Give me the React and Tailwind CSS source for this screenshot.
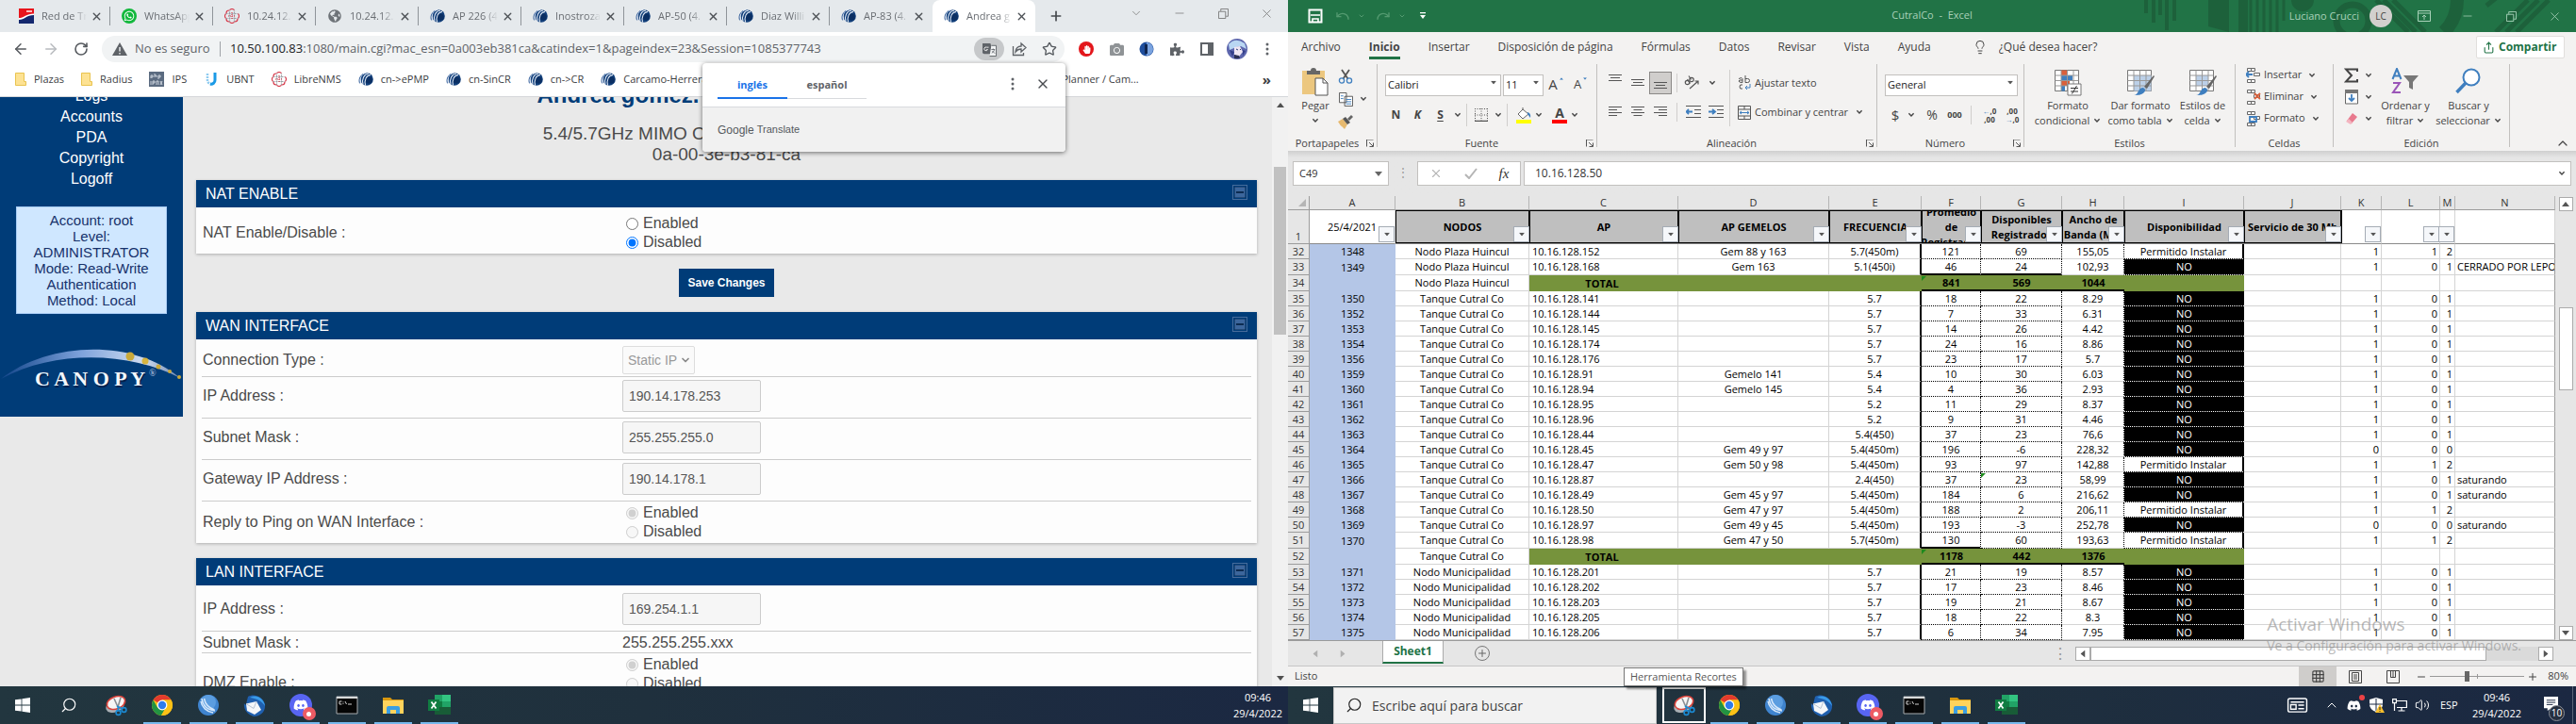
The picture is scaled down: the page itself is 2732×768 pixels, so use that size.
import React from "react";
import {
  ArrowLeft, ArrowRight, RotateCw, Star, X, Plus, Minus, ChevronDown, ChevronUp, Search,
  Undo, Redo, Lightbulb, Share, Grid3x3, Volume2,
} from "lucide-react";
import { FaWhatsapp, FaGlobeAmericas, FaPuzzlePiece, FaDiscord, FaHandPaper, FaCamera } from "react-icons/fa";

/* ---------- small shared drawings ---------- */

const Chev = ({ className = "" }) => (
  <svg viewBox="0 0 8 6" className={`h-[6px] w-2 shrink-0 ${className}`} fill="none" stroke="#444" strokeWidth="1.4">
    <path d="M1.4 1.3 4 4l2.6-2.7" />
  </svg>
);

const Tri = ({ className = "" }) => (
  <svg viewBox="0 0 8 5" className={`h-[5px] w-2 shrink-0 ${className}`}>
    <path d="M0 0h8L4 5z" fill="currentColor" />
  </svg>
);

const Cambium = () => (
  <svg viewBox="0 0 16 16" className="size-4 shrink-0">
    <circle cx="9" cy="8" r="6.8" fill="#123f7a" />
    <circle cx="11.2" cy="9" r="3.6" fill="#0b2f63" />
    <path d="M8.500 1C3 2 1 7 2.600 12M11 2C6 2.600 3.400 8 5 13.500M13 3.400C8.500 4 6 9 7.600 14.600" stroke="#dfe8f5" strokeWidth="1.100" fill="none" />
    <path d="M5 2.600C1.400 5 .2 9 1.600 12.400" stroke="#2a5796" strokeWidth="1" fill="none" />
  </svg>
);

const Telefonica = () => (
  <svg viewBox="0 0 16 16" className="size-4 shrink-0">
    <path d="M0 0h16v16H0z" fill="#e8141c" />
    <path d="M0 16V11C5 11 8 6 16 6v10z" fill="#14286e" />
    <path d="M0 12C6 12 8 7 16 7v-1.6C8 5.400 5 10 0 10z" fill="#fff" />
    <path d="M8 2h6v2H8z" fill="#fbb" />
  </svg>
);

const Knot = () => (
  <svg viewBox="0 0 16 16" className="size-4 shrink-0" fill="none" strokeWidth="1.2">
    <path d="M5.500 14.500v-13M10.500 14.500v-13M1.500 5.500h13M1.500 10.500h13" stroke="#9aa0a6" strokeDasharray="2 1" />
    <path d="M5.500 1.500C8 0 8 0 10.500 1.500M5.500 14.500C8 16 8 16 10.500 14.500M1.500 5.500C0 8 0 8 1.500 10.500M14.500 5.500C16 8 16 8 14.500 10.500M2 5c0-2 1-3 3-3M11 14c2 0 3-1 3-3M2 11c0 2 1 3 3 3" stroke="#d8394a" />
    <path d="M8 4v8M4 8h8" stroke="#d8394a" strokeDasharray="1 1" />
  </svg>
);

const Folder = () => (
  <svg viewBox="0 0 12 16" className="h-4 w-3 shrink-0">
    <path d="M.5 1.500h9v9h2v4H.5z" fill="#fde293" stroke="#e9c34f" />
  </svg>
);

const ChromeLogo = () => (
  <svg viewBox="0 0 24 24" className="size-6">
    <circle cx="12" cy="12" r="11" fill="#fbc116" />
    <path d="M12 12 2.500 6.500A11 11 0 0 1 21.500 6.500H12z" fill="#e33b2e" />
    <path d="M12 12 7.200 14.800 2.500 6.500A11 11 0 0 0 11 23l4.800-8.200z" fill="#229342" />
    <path d="M21.500 6.500H12v5l3.800 3.300L11 23A11 11 0 0 0 21.500 6.500z" fill="#fbc116" />
    <circle cx="12" cy="12" r="5.400" fill="#fff" />
    <circle cx="12" cy="12" r="4.200" fill="#2f7bea" />
  </svg>
);

const Snip = () => (
  <svg viewBox="0 0 24 24" className="size-6">
    <ellipse cx="11" cy="13" rx="10" ry="6.500" fill="#a9afb4" transform="rotate(-20 11 13)" />
    <ellipse cx="12" cy="9.500" rx="10" ry="6.500" fill="#f6f6f6" stroke="#d8433b" strokeWidth="1.600" transform="rotate(-20 12 9.500)" />
    <path d="M10 5l4 9M17 4l-3 10" stroke="#8a8f94" strokeWidth="1.600" />
    <circle cx="14.500" cy="20" r="2.400" fill="none" stroke="#1b8ad3" strokeWidth="1.600" />
    <circle cx="20.500" cy="17" r="2.400" fill="none" stroke="#1b8ad3" strokeWidth="1.600" />
    <path d="m13 13 6 3m-5-3 .5 5" stroke="#1b8ad3" strokeWidth="1.600" />
  </svg>
);

const BlueSwirl = () => (
  <svg viewBox="0 0 24 24" className="size-6">
    <circle cx="12" cy="12" r="11" fill="#3f84cf" />
    <circle cx="12" cy="9" r="8" fill="#5b9de0" />
    <path d="M5 5c1 7 6 12 14 13M7.500 5c1 5 5 10 11 12M4 8c1 6 6 11 13 12" stroke="#d5e7fa" strokeWidth="1.500" fill="none" />
  </svg>
);

const Thunderbird = () => (
  <svg viewBox="0 0 24 24" className="size-6">
    <path d="M5 3c6-4 16 0 18 8 1 8-5 13-12 13C4 22 0 16 1 10c1 2 2 2 2 1z" fill="#1f5fae" />
    <path d="M7 4c7-4 15 1 16 9-3-5-8-8-16-9z" fill="#3a9be8" />
    <path d="M3 10.500 14 8l5 9-7 5-8-4z" fill="#f4f6f9" />
    <path d="m3 10.500 8 5L14 8" fill="none" stroke="#b7c3d3" />
  </svg>
);

const DiscordApp = () => (
  <span className="relative flex size-6 items-center justify-center rounded-full bg-[#5865f2] text-white">
    <FaDiscord className="size-4" />
    <span className="absolute -right-1 -bottom-1 flex size-[14px] items-center justify-center rounded-full bg-[#ed5b64]">
      <span className="size-[5px] rounded-full bg-white" />
    </span>
  </span>
);

const Cmd = () => (
  <svg viewBox="0 0 24 20" className="h-5 w-6">
    <path d="M1 1h22v18H1z" fill="#050505" stroke="#a9adb0" />
    <path d="M1 1h22v2H1z" fill="#d8dadb" />
    <path d="M6.500 6H4v3h2.500M8 6.500v.8M8 8.200v.8M10 6l1.500 3M13 9h4" stroke="#e8e8e8" strokeWidth=".9" fill="none" />
  </svg>
);

const Explorer = () => (
  <svg viewBox="0 0 24 20" className="h-5 w-6">
    <path d="M1 2h8l2 2h12v4H1z" fill="#d9980f" />
    <path d="M1 5h22v14H1z" fill="#ffd35c" />
    <path d="M5 19v-6q0-2 2-2h10q2 0 2 2v6h-4v-4H9v4z" fill="#3b9ee2" />
  </svg>
);

const ExcelApp = () => (
  <svg viewBox="0 0 24 24" className="size-6">
    <path d="M7 1h8v7H7z" fill="#21a366" /><path d="M15 1h9v7h-9z" fill="#33c481" />
    <path d="M7 8h8v6H7z" fill="#107c41" /><path d="M15 8h9v6h-9z" fill="#21a366" />
    <path d="M7 14h17v8H7z" fill="#185c37" />
    <path d="M0 6h12v12H0z" fill="#107c41" />
    <path d="m3.500 8.500 5 7m0-7-5 7" stroke="#fff" strokeWidth="1.700" />
  </svg>
);

const WinLogo = () => (
  <svg viewBox="0 0 16 16" className="size-4" fill="#fff">
    <path d="M0 2.300 6.600 1.400v6.200H0zM7.400 1.300 16 0v7.600H7.400zM0 8.400h6.600v6.200L0 13.700zM7.400 8.400H16V16l-8.600-1.300z" />
  </svg>
);

const RestoreIcon = ({ className = "" }) => (
  <svg viewBox="0 0 12 12" className={`size-[11px] ${className}`} fill="none" stroke="currentColor">
    <path d="M.5 3.500h8v8h-8zM3 3V.5h8.500V9H9" />
  </svg>
);

/* ---------- Chrome window ---------- */

const tabs = [
  ["Red de Tr", Telefonica], ["WhatsApp", "wa"], ["10.24.12.", Knot], ["10.24.12.", "globe"],
  ["AP 226 (4", Cambium], ["Inostroza", Cambium], ["AP-50 (4.", Cambium], ["Diaz Willi", Cambium],
  ["AP-83 (4.", Cambium], ["Andrea g", Cambium],
];

const TabIcon = ({ kind: K }) => {
  if (K === "wa") return <span className="flex size-4 shrink-0 items-center justify-center rounded-full bg-[#12b83c] text-white"><FaWhatsapp className="size-3" /></span>;
  if (K === "globe") return <FaGlobeAmericas className="mx-px size-[14px] shrink-0 text-[#6e7378]" />;
  return <K />;
};

function TabStrip() {
  return (
    <div className="flex h-[34px] shrink-0 bg-[#e5e9ec] pl-2 text-[11px] text-[#6a6e73]">
      {tabs.map(([t, k], i) => {
        const active = i === tabs.length - 1;
        return (
          <div key={i} className={active ? "flex w-[109px] items-center rounded-t-lg bg-white pl-3" : "flex w-[109px] items-center pl-3"}>
            <TabIcon kind={k} />
            <span className="ml-2 w-[48px] overflow-hidden whitespace-nowrap [mask-image:linear-gradient(to_right,black_70%,transparent)]">{t}</span>
            <button aria-label="Cerrar pestaña" className="ml-[2px] flex size-4 items-center justify-center"><X className="size-[13px] text-[#4c5055]" strokeWidth={2.5} /></button>
            {i < tabs.length - 2 && <span className="ml-auto h-5 w-px bg-[#8f9499]" />}
          </div>
        );
      })}
      <button aria-label="Nueva pestaña" className="ml-[14px] flex w-4 items-center justify-center text-[#45494d]"><Plus className="size-4" strokeWidth={2.5} /></button>
      <div className="ml-auto flex h-7 items-center text-[#777]">
        <button aria-label="Buscar pestañas" className="flex w-[46px] justify-center"><ChevronDown className="size-[14px]" strokeWidth={1.3} /></button>
        <button aria-label="Minimizar" className="flex w-[46px] justify-center"><Minus className="size-[14px]" strokeWidth={1.3} /></button>
        <button aria-label="Restaurar" className="flex w-[46px] justify-center"><RestoreIcon /></button>
        <button aria-label="Cerrar" className="flex w-[46px] justify-center"><X className="size-[15px]" strokeWidth={1.3} /></button>
      </div>
    </div>
  );
}

const Dots = () => (
  <svg viewBox="0 0 4 14" className="h-[14px] w-1" fill="#5f6368"><circle cx="2" cy="2" r="1.500" /><circle cx="2" cy="7" r="1.500" /><circle cx="2" cy="12" r="1.500" /></svg>
);

function Omnibar() {
  return (
    <div className="flex h-9 shrink-0 items-center bg-white pl-[6px]">
      <button aria-label="Atrás" className="flex w-8 justify-center"><ArrowLeft className="size-[18px] text-[#55595e]" /></button>
      <button aria-label="Adelante" className="flex w-8 justify-center"><ArrowRight className="size-[18px] text-[#b8bbbf]" /></button>
      <button aria-label="Recargar" className="flex w-8 justify-center"><RotateCw className="size-4 text-[#55595e]" strokeWidth={2.4} /></button>
      <div className="ml-[6px] flex h-7 flex-1 items-center rounded-full bg-[#f1f3f4] pl-[11px] text-[13px] text-[#5f6368]">
        <svg viewBox="0 0 16 14" className="h-[14px] w-4"><path d="M8 0l8 14H0z" fill="#5f6368" /><path d="M8 5v4.500M8 11v1.500" stroke="#f1f3f4" strokeWidth="1.400" /></svg>
        <span className="ml-2 w-[82px] whitespace-nowrap">No es seguro</span>
        <span className="ml-2 h-4 w-px bg-[#9fa3a7]" />
        <div className="ml-[10px] whitespace-nowrap">
          <span className="text-[#202124]">10.50.100.83</span>:1080/main.cgi?mac_esn=0a003eb381ca&amp;catindex=1&amp;pageindex=23&amp;Session=1085377743
        </div>
        <div className="ml-auto flex items-center">
          <button aria-label="Traducir" className="flex h-6 w-8 items-center justify-center rounded-full bg-[#c6c8ca]">
            <svg viewBox="0 0 16 16" className="size-[15px]"><path d="M0 1h9l3 12H2q-2 0-2-2z" fill="#5f6368" /><path d="M10 3.500h5.500v12H8" fill="#f1f3f4" stroke="#5f6368" /><path d="M7 5.500H4.800a2 2 0 1 0 1 2.500H4.500" stroke="#eee" fill="none" /><path d="M10 8h4M12 7v1M13.500 8c-.5 2-1.500 3-3 4M11 9.500l3 3" stroke="#5f6368" fill="none" strokeWidth=".9" /></svg>
          </button>
          <button aria-label="Compartir" className="flex w-8 justify-center">
            <svg viewBox="0 0 16 16" className="size-4" fill="none" stroke="#5f6368" strokeWidth="1.300"><path d="M1.500 5v9.500h11V12M4 11c.5-4 3-6 6-6V2l5 4.500L10 11V8C7.500 8 5.500 9 4 11z" /></svg>
          </button>
          <button aria-label="Marcador" className="flex w-8 justify-center"><Star className="size-4 text-[#55595e]" /></button>
        </div>
      </div>
      <div className="flex items-center pr-[6px] pl-[7px] text-[#5f6368]">
        <button aria-label="Bloqueador" className="flex w-8 justify-center">
          <span className="flex size-4 items-center justify-center rounded-full bg-[#e3161b]"><FaHandPaper className="size-[9px] text-white" /></span>
        </button>
        <button aria-label="Captura" className="flex w-8 justify-center"><FaCamera className="size-[15px] text-[#8f9396]" /></button>
        <button aria-label="Extensión" className="flex w-8 justify-center"><svg viewBox="0 0 16 16" className="size-4"><circle cx="8" cy="8" r="7.500" fill="#1f4e9c" /><path d="M8 1a7 7 0 0 1 0 14z" fill="#7aa3df" /><path d="M6 3h3v10H6z" fill="#10264f" /></svg></button>
        <button aria-label="Extensiones" className="flex w-8 justify-center"><FaPuzzlePiece className="size-[15px]" /></button>
        <button aria-label="Panel lateral" className="flex w-8 justify-center"><svg viewBox="0 0 14 14" className="size-[14px]"><path d="M1 1h12v12H1z" fill="none" stroke="#5f6368" strokeWidth="2" /><path d="M8 1h5v12H8z" fill="#5f6368" /></svg></button>
        <button aria-label="Perfil" className="flex w-8 justify-center">
          <svg viewBox="0 0 22 22" className="size-[22px]"><circle cx="11" cy="11" r="11" fill="#5d66ad" /><path d="M2 6Q9-2 19 5l2 6-6-3-5 1-7 3z" fill="#b9d6f2" /><path d="M8 9l6-1 3 6-4 5-5-2z" fill="#efe6f3" /><path d="M10 11l2 1M14 11l1 1" stroke="#2c3c78" /><path d="M3 12l5 2-2 5zM17 12l3 1-3 5z" fill="#35408a" /><path d="M8 17l5 1 1 3-6 0z" fill="#2b2f52" /></svg>
        </button>
        <button aria-label="Menú" className="flex w-8 justify-center"><Dots /></button>
      </div>
    </div>
  );
}

const bookmarks = [
  ["Plazas", Folder], ["Radius", Folder],
  ["IPS", () => <svg viewBox="0 0 16 16" className="size-4 shrink-0"><path d="M0 0h16v16H0z" fill="#5b6b80" /><path d="M2 7V4h2v2H2M6 2v4m0-2h2v2M10 8V4h2v2h-2M2 10v4M4 14v-4h2v2H4M8 14v-4h2v4M12 10l2 4m0-4-2 4" stroke="#e5eaf0" strokeWidth=".8" fill="none" /></svg>],
  ["UBNT", () => <svg viewBox="0 0 16 16" className="size-4 shrink-0"><path d="M4 2v7a4 4 0 0 0 4 4" fill="none" stroke="#8ecbf0" strokeWidth="2.500" strokeDasharray="2 1" /><path d="M12 1v8a4 4 0 0 1-5 4" fill="none" stroke="#1b9ae6" strokeWidth="3" /></svg>],
  ["LibreNMS", Knot], ["cn->ePMP", Cambium], ["cn-SinCR", Cambium], ["cn->CR", Cambium], ["Carcamo-Herrera", Cambium],
];

function Bookmarks() {
  return (
    <nav className="flex h-[33px] shrink-0 items-center border-b border-[#d5d7da] bg-white pb-1 pl-4 text-[11px] text-[#3c4043]">
      <div className="flex items-center gap-[18px]">
        {bookmarks.map(([t, K]) => (
          <a key={t} href="#b" className="flex items-center gap-2 whitespace-nowrap"><K />{t}</a>
        ))}
      </div>
      <a href="#b" className="ml-auto whitespace-nowrap">Planner / Cam...</a>
      <button aria-label="Más marcadores" className="mr-[18px] ml-[131px] text-[15px] font-bold">»</button>
    </nav>
  );
}

function TranslatePopup() {
  return (
    <div className="absolute top-[67px] right-[236px] z-10 w-[385px] rounded-[4px] bg-white shadow-[0_1px_5px_rgba(0,0,0,0.55)]">
      <div className="flex h-[47px] items-end border-b border-[#d8dadd] px-4">
        <div className="mb-2 flex text-[11px] font-bold">
          <button className="h-7 w-[74px] border-b-2 border-[#1a73e8] text-[#1a73e8]">inglés</button>
          <button className="h-7 w-[84px] border-b border-[#d8dadd] text-[#5f6368]">español</button>
        </div>
        <button aria-label="Opciones" className="mb-[17px] ml-auto"><Dots /></button>
        <button aria-label="Cerrar" className="mb-4 ml-[22px]"><X className="size-4 text-[#4a4d51]" /></button>
      </div>
      <div className="flex h-[47px] items-center gap-[3px] rounded-b-[4px] bg-[#f1f1f1] px-4 font-['Liberation_Sans',Arial,sans-serif] text-[12px] text-[#55595e]">
        <span className="text-[12px]">Google</span><span className="text-[11px]">Translate</span>
      </div>
    </div>
  );
}

const SectionHead = ({ children }) => (
  <h2 className="flex h-[29px] items-center justify-between bg-[#003c78] px-[10px] text-[16px] text-white">
    {children}
    <button aria-label="Contraer" className="mb-1 flex size-4 items-center justify-center border border-[#476c9b] p-px">
      <svg viewBox="0 0 12 12" className="size-3"><path d="M0 0h12v12H0z" fill="#3c669c" stroke="#0d2c52" /><path d="M2 6h8" stroke="#0d2c52" strokeWidth="2" /></svg>
    </button>
  </h2>
);

const Radios = ({ name, value, disabled }) => (
  <div role="radiogroup" aria-label={name}>
    {["Enabled", "Disabled"].map((o) => (
      <label key={o} className="flex h-5 items-center gap-[5px]">
        <input type="radio" name={name} defaultChecked={o === value} disabled={disabled} className="ml-1 size-[13px] accent-[#0075ff]" />
        {o}
      </label>
    ))}
  </div>
);

const Field = ({ id, value }) => (
  <input id={id} disabled defaultValue={value} className="h-[34px] w-[147px] rounded-[2px] border border-[#ccc] bg-[#f6f6f6] px-[6px] text-[14px] text-[#555]" />
);

const cols = "grid grid-cols-[446px_1fr]";
const row = `${cols} items-center border-b border-[#ccc]`;
const lab = "pl-px";

function RadioPage() {
  return (
    <div className="flex min-h-0 flex-1 overflow-hidden bg-[#e9e9e9] font-['Liberation_Sans',Arial,sans-serif] text-[16px] text-[#4a4a4a]">
      <div className="-mt-4 flex flex-1 items-start">
        <aside className="flex w-[194px] flex-col items-center bg-[#003c78] pt-[3px] pb-[26px] text-white">
          {["Logs", "Accounts", "PDA", "Copyright", "Logoff"].map((t) => (
            <a key={t} href="#nav" className="h-[22px] leading-[24px]">{t}</a>
          ))}
          <div className="mt-[19px] w-[160px] border border-[#a9cdf5] bg-[#cfe7ff] px-2 py-[5px] text-center text-[15px] leading-[17px] text-[#17326b]">
            Account: root<br />Level:<br />ADMINISTRATOR<br />Mode: Read-Write<br />Authentication<br />Method: Local
          </div>
          <svg viewBox="0 0 194 46" className="mt-[37px] h-[46px] w-full">
            <defs>
              <linearGradient id="arc" x1="0" x2="1"><stop offset="0" stopColor="#12458a" /><stop offset=".45" stopColor="#7fa3dc" /><stop offset=".8" stopColor="#cfdcf0" /><stop offset="1" stopColor="#6d86b0" /></linearGradient>
            </defs>
            <path d="M1 32C50-7 140-12 191 31 140 4 60 0 1 32z" fill="url(#arc)" />
            <circle cx="138" cy="8" r="4.500" fill="#c9a93a" /><circle cx="154" cy="13" r="3.500" fill="#d6b440" /><circle cx="168" cy="19" r="2.500" fill="#c9a93a" /><circle cx="180" cy="24" r="2" fill="#c9a93a" /><circle cx="190" cy="30" r="2" fill="#c9a93a" />
            <text x="38" y="41" fontFamily="Liberation Serif, serif" fontWeight="bold" fontSize="22" fill="#04204a">C A N O P Y</text>
            <text x="37" y="39" fontFamily="Liberation Serif, serif" fontWeight="bold" fontSize="22" fill="#f4f7fb">C A N O P Y</text>
            <text x="158" y="29" fontFamily="Liberation Serif, serif" fontSize="10" fill="#c5d2e6">®</text>
          </svg>
        </aside>

        <main className="mr-4 ml-[14px] flex-1">
          <h1 className="mx-auto h-7 w-[402px] text-[24px] leading-7 font-bold text-[#003c78]">Andrea gomez.</h1>
          <p className="mt-4 text-center text-[19px] leading-[22px]">5.4/5.7GHz MIMO OFDM - Subscriber Module<br />0a-00-3e-b3-81-ca</p>

          <section className="mt-4 bg-[#fdfdfd] shadow-[0_1px_3px_rgba(0,0,0,0.25)]">
            <SectionHead>NAT ENABLE</SectionHead>
            <div className="px-[6px] pt-[7px] pb-[2px]">
              <div className={`${cols} h-10 items-center`}>
                <span className={lab}>NAT Enable/Disable :</span>
                <Radios name="NAT" value="Disabled" />
              </div>
            </div>
          </section>

          <div className="flex justify-center py-4">
            <button className="h-[30px] w-[101px] bg-[#003c78] text-[12px] font-bold text-white">Save Changes</button>
          </div>

          <section className="bg-[#fdfdfd] shadow-[0_1px_3px_rgba(0,0,0,0.25)]">
            <SectionHead>WAN INTERFACE</SectionHead>
            <div className="px-[6px] pt-[5px]">
              <div className={`${row} h-[35px]`}>
                <label htmlFor="ct" className={lab}>Connection Type :</label>
                <div className="relative w-[77px]">
                  <select id="ct" disabled className="h-[30px] w-full appearance-none rounded-[2px] border border-[#ddd] bg-[#fafafa] px-[5px] text-[14px] text-[#999]"><option>Static IP</option></select>
                  <ChevronDown className="pointer-events-none absolute top-[9px] right-1 size-3 text-[#8a8a8a]" strokeWidth={3.500} />
                </div>
              </div>
              {[["IP Address :", "190.14.178.253"], ["Subnet Mask :", "255.255.255.0"], ["Gateway IP Address :", "190.14.178.1"]].map(([l, v]) => (
                <div key={l} className={`${row} h-[44px] pb-1`}>
                  <label htmlFor={l} className={lab}>{l}</label>
                  <Field id={l} value={v} />
                </div>
              ))}
              <div className={`${cols} h-[44px] items-center`}>
                <span className={lab}>Reply to Ping on WAN Interface :</span>
                <Radios name="Ping" value="Enabled" disabled />
              </div>
            </div>
          </section>

          <section className="mt-4 bg-[#fdfdfd] shadow-[0_1px_3px_rgba(0,0,0,0.25)]">
            <SectionHead>LAN INTERFACE</SectionHead>
            <div className="px-[6px] pt-[5px]">
              <div className={`${row} h-[44px] pb-1`}>
                <label htmlFor="lanip" className={lab}>IP Address :</label>
                <Field id="lanip" value="169.254.1.1" />
              </div>
              <div className={`${row} h-[23px]`}>
                <span className={lab}>Subnet Mask :</span>
                <span>255.255.255.xxx</span>
              </div>
              <div className={`${cols} h-[62px]`}>
                <span className={`${lab} self-center`}>DMZ Enable :</span>
                <div className="pt-[2px]"><Radios name="DMZ" value="Enabled" disabled /></div>
              </div>
            </div>
          </section>
        </main>
      </div>
      <div className="flex w-[17px] flex-col items-center justify-between bg-[#f1f1f1] py-[6px] text-[#505050]">
        <Tri className="rotate-180" />
        <span className="mt-[63px] mb-auto h-[178px] w-[13px] bg-[#c1c1c1]" />
        <Tri />
      </div>
    </div>
  );
}

/* ---------- taskbars ---------- */

const Task = ({ label, children, open = true }) => (
  <button aria-label={label} className="relative flex h-10 w-[49px] items-center justify-center">
    {children}
    {open && <span className="absolute bottom-0 h-[2px] w-10 bg-[#76b9ed]" />}
  </button>
);

const Apps = () => (
  <>
    <Task label="Chrome"><ChromeLogo /></Task>
    <Task label="AnyConnect"><BlueSwirl /></Task>
    <Task label="Thunderbird"><Thunderbird /></Task>
    <Task label="Discord"><DiscordApp /></Task>
    <Task label="Consola"><Cmd /></Task>
    <Task label="Explorador"><Explorer /></Task>
    <Task label="Excel"><ExcelApp /></Task>
  </>
);

const Clock = () => (
  <div className="text-center text-[11px] leading-[17px] text-white">09:46<br />29/4/2022</div>
);

const taskbar = "flex h-10 shrink-0 items-center bg-linear-to-r from-[#22363f] via-[#1f303d] to-[#1b2842]";

function LeftTaskbar() {
  return (
    <footer className={taskbar}>
      <button aria-label="Inicio" className="flex w-12 justify-center"><WinLogo /></button>
      <button aria-label="Buscar" className="flex w-[50px] justify-center text-white"><Search className="size-[18px] -scale-x-100" strokeWidth={1.500} /></button>
      <Task label="Recortes" open={false}><Snip /></Task>
      <Apps />
      <div className="mr-[6px] ml-auto"><Clock /></div>
    </footer>
  );
}

function RightTaskbar() {
  return (
    <footer className={`${taskbar} relative`}>
      <button aria-label="Inicio" className="flex w-12 justify-center"><WinLogo /></button>
      <label className="flex h-[39px] w-[343px] items-center border border-[#c8c8c8] bg-[#f2f2f2] pl-3">
        <Search className="size-[18px] -scale-x-100 text-[#222]" strokeWidth={1.500} />
        <input aria-label="Buscar" placeholder="Escribe aquí para buscar" className="ml-[10px] w-[260px] bg-transparent text-[14px] text-[#444] outline-none placeholder:text-[#444]" />
      </label>
      <button aria-label="Recortes" className="ml-[6px] flex h-[38px] w-[46px] items-center justify-center border-2 border-white">
        <Snip />
      </button>
      <div role="tooltip" className="absolute bottom-10 left-[356px] z-10 border border-[#767676] bg-white px-[6px] text-[11px] leading-[18px] whitespace-nowrap text-[#575757] shadow-[3px_3px_2px_rgba(0,0,0,0.4)]">Herramienta Recortes</div>
      <Apps />
      <div className="ml-auto flex items-center text-white">
        <svg viewBox="0 0 24 18" className="h-[17px] w-6" fill="none" stroke="#fff" strokeWidth="1.500"><rect x="1" y="1" width="21" height="15" rx="2" /><path d="M4 5h15M4 8h6v5H4zM12.500 8.500H19M12.500 12.500H19" /></svg>
        <button aria-label="Iconos ocultos" className="ml-4"><ChevronUp className="size-4" strokeWidth={1.500} /></button>
        <span className="relative ml-2 text-[15px]"><FaDiscord /><span className="absolute -top-1 -right-1 size-[6px] rounded-full bg-[#ed4245]" /></span>
        <svg viewBox="0 0 16 16" className="ml-[9px] size-4"><path d="M7 0l7 2v5c0 4-3 7-7 8-4-1-7-4-7-8V2z" fill="#fff" /><path d="M7 1v13M0 7h14" stroke="#1b2842" /><path d="M11 7l5 9H6z" fill="#fbc02d" /><path d="M11 10v3M11 14v1" stroke="#222" /></svg>
        <svg viewBox="0 0 16 14" className="ml-2 h-[14px] w-4" fill="none" stroke="#fff" strokeWidth="1.200"><path d="M5 2.500h10.400v7H5M10 9.500v3.500M6.500 13h7M.6.600h3.800v4H.6zM2.500 4.600V13" /></svg>
        <Volume2 className="ml-2 size-4" strokeWidth={1.500} />
        <span className="ml-[11px] w-[22px] text-[11px]">ESP</span>
        <div className="ml-3"><Clock /></div>
        <button aria-label="Notificaciones" className="relative mr-[9px] ml-[17px] flex size-7 items-center justify-center pb-1">
          <svg viewBox="0 0 16 16" className="size-[15px]"><path d="M0 0h16v13H8l-4 3v-3H0z" fill="#fff" /><path d="M3 4h10M3 6.500h10M3 9h7" stroke="#1b2842" /></svg>
          <span className="absolute -right-px -bottom-[3px] flex size-[17px] items-center justify-center rounded-full border border-[#8a8f98] bg-[#26303f] text-[10px]">10</span>
        </button>
        <span className="mr-[3px] h-10 w-px bg-[#5b6678]" />
      </div>
    </footer>
  );
}

/* ---------- Excel window ---------- */

function ExcelTitle() {
  return (
    <header className="relative flex h-[34px] shrink-0 items-center bg-[#217346] text-[11px] text-[#a9d1b9]">
      <svg viewBox="0 0 470 34" className="absolute top-0 right-0 h-[34px] w-[470px]" stroke="#1d613b" fill="none">
        <path d="M14 0v14M22 0v24M29 0v16M36 0v32M44 0v22" strokeWidth="4" />
        <path d="M80 0v28l22 6V0zM112 0h10v34h-10z" fill="#1d613b" stroke="none" />
        <path d="M125 0v34M132 0v34M139 0v34M146 0v34M153 0v34M160 0v22" strokeWidth="3" />
        <circle cx="180" cy="0" r="12" fill="#1d613b" stroke="none" />
        <circle cx="233" cy="22" r="17" strokeWidth="7" />
        <path d="M258 0l34 34M266 0l34 34M276 0l34 34" strokeWidth="5" />
        <path d="M330 34q14-14 14-34" strokeWidth="14" />
        <path d="M385 34l34-34M396 34l34-34M407 34l34-34M375 6l10-8" strokeWidth="5" />
      </svg>
      <button aria-label="Guardar" className="ml-[21px]"><svg viewBox="0 0 16 16" className="size-4"><path d="M1.500 1.500h13v13h-13z" fill="none" stroke="#fff" strokeWidth="2" /><path d="M3 7h10M5 15v-4h6v4" stroke="#fff" strokeWidth="1.600" fill="none" /></svg></button>
      <button aria-label="Deshacer" className="ml-[13px] flex items-center gap-2 text-[#549a70]"><Undo className="size-4" /><ChevronDown className="size-2" strokeWidth={3} /></button>
      <button aria-label="Rehacer" className="ml-[11px] flex items-center gap-2 text-[#549a70]"><Redo className="size-4" /><ChevronDown className="size-2" strokeWidth={3} /></button>
      <button aria-label="Personalizar" className="ml-[14px] text-white"><svg viewBox="0 0 8 8" className="size-2"><path d="M1 0h6v1.200H1zM1 3h6L4 7z" fill="#fff" /></svg></button>
      <span className="absolute inset-x-0 top-2 text-center">CutralCo&nbsp; -&nbsp; Excel</span>
      <div className="relative ml-auto flex items-center">
        <span>Luciano Crucci</span>
        <span className="ml-[11px] flex size-6 items-center justify-center rounded-full bg-[#d2d0ce] text-[10px] text-[#444]">LC</span>
        <button aria-label="Opciones de cinta" className="ml-[11px] flex w-[46px] justify-center"><svg viewBox="0 0 14 12" className="h-3 w-[14px]" fill="none" stroke="currentColor"><path d="M.5.500h13v11H.5zM.5 3h13M7 10V5M5 7l2-2 2 2" /></svg></button>
        <button aria-label="Minimizar" className="flex w-[46px] justify-center"><Minus className="size-[14px]" strokeWidth={1.300} /></button>
        <button aria-label="Restaurar" className="flex w-[46px] justify-center"><RestoreIcon /></button>
        <button aria-label="Cerrar" className="flex w-[46px] justify-center"><X className="size-[15px]" strokeWidth={1.300} /></button>
      </div>
    </header>
  );
}

function RibbonTabs() {
  return (
    <nav className="flex h-8 shrink-0 items-center bg-[#f3f2f1] pl-[14px] text-[12px] text-[#444]">
      <div className="flex gap-[30px]">
        {["Archivo", "Inicio", "Insertar", "Disposición de página", "Fórmulas", "Datos", "Revisar", "Vista", "Ayuda"].map((t) => (
          <a key={t} href="#tab" className={t === "Inicio" ? "border-b-[3px] border-[#217346] pt-[3px] leading-5 font-bold" : "pt-[3px] leading-5"}>{t}</a>
        ))}
      </div>
      <label className="ml-[44px] flex items-center gap-3"><Lightbulb className="size-4" strokeWidth={1.500} /><input aria-label="Ayuda" placeholder="¿Qué desea hacer?" className="w-[160px] bg-transparent outline-none placeholder:text-[#444]" /></label>
      <button className="mr-3 ml-auto flex h-6 w-[94px] items-center gap-1 rounded-[2px] border border-[#e1dfdd] bg-white pl-[6px] font-bold text-[#217346]"><Share className="size-[13px]" />Compartir</button>
    </nav>
  );
}

const Launch = () => (
  <svg viewBox="0 0 8 8" className="size-2" fill="none" stroke="#555"><path d="M7.500 0H.5v7.500M3 3l4 4M7.500 3.500v4h-4" /></svg>
);

const Group = ({ label, w, launch, children }) => (
  <div className={`flex h-[88px] shrink-0 flex-col border-r border-[#c2c0be] ${w}`}>
    <div className="min-h-0 flex-1">{children}</div>
    <div className="flex h-2 items-center justify-center text-[11px] leading-4 text-[#444]">
      <span className="flex-1 text-center">{label}</span>{launch && <span className="mr-[3px]"><Launch /></span>}
    </div>
  </div>
);

const Lines = ({ ws, x = "c", y = 1 }) => (
  <svg viewBox="0 0 14 16" className="h-4 w-[14px]" stroke="#555">
    {ws.map((w, i) => { const s = x === "l" ? 0 : x === "r" ? 14 - w : (14 - w) / 2; return <path key={i} d={`M${s} ${y + i * 3 + 0.5}h${w}`} />; })}
  </svg>
);

const Sep = ({ h = "h-5" }) => <span className={`mx-[5px] w-px shrink-0 bg-[#d0cecc] ${h}`} />;

const Combo = ({ label, value, w }) => (
  <div className={`relative ${w}`}>
    <select aria-label={label} className="h-[23px] w-full appearance-none border border-[#c2c0be] bg-white pl-[2px] text-[11px] text-[#222]"><option>{value}</option></select>
    <Tri className="pointer-events-none absolute top-[9px] right-1 scale-75 text-[#555]" />
  </div>
);

const Big = ({ w, icon, a, b }) => (
  <button className={`flex flex-col items-center text-[11px] leading-4 text-[#444] ${w}`}>
    <span className="flex h-9 items-start pt-1">{icon}</span>
    <span className="whitespace-nowrap">{a}</span>
    <span className="flex h-4 items-center gap-1 whitespace-nowrap">{b}<Chev /></span>
  </button>
);

const Sheet = ({ fill, marks, brush }) => (
  <svg viewBox="0 0 30 30" className="size-[30px]">
    <path d="M1.500 2.500h25v22h-25z" fill="#fff" stroke="#777" />
    {fill}
    <path d="M1.500 8h25M1.500 13.500h25M1.500 19h25M8 2.500v22M14.500 2.500v22M21 2.500v22" stroke="#999" fill="none" />
    {marks}
    {brush && <><path d="M29 8 19 20l3 2 8-13z" fill="#666" /><path d="M8 29c5 0 4-7 9-8 3 0 4 3 2 5-3 3-7 3-11 3z" fill="#3f7fbf" /></>}
  </svg>
);

const ib = "flex h-6 items-center justify-center";

function Ribbon() {
  return (
    <div className="flex h-[94px] shrink-0 bg-[#f3f2f1] pt-[2px] text-[#444]">
      <Group label="Portapapeles" w="w-[95px]" launch>
        <div className="flex pl-[13px]">
          <Big w="w-[32px]" a="Pegar" icon={
            <svg viewBox="0 0 28 30" className="h-[30px] w-7"><path d="M0 3h24v25H0z" fill="#ecc77f" /><path d="M5 7V3h4q0-3 3-3t3 3h4v4z" fill="#666" /><path d="M14 11h8l5 5v13H14z" fill="#fff" stroke="#555" /><path d="M22 11v5h5" fill="none" stroke="#555" /></svg>
          } />
          <div className="flex flex-col pt-px pl-[6px]">
            <button aria-label="Cortar" className={`${ib} w-5`}><svg viewBox="0 0 16 16" className="size-4" fill="none"><path d="M4 1l6.500 9.500M12 1 5.500 10.500" stroke="#555" strokeWidth="1.800" /><circle cx="4" cy="12.500" r="2.600" stroke="#3f7fbf" strokeWidth="1.300" /><circle cx="12" cy="12.500" r="2.600" stroke="#3f7fbf" strokeWidth="1.300" /></svg></button>
            <div className="flex items-center gap-[5px]"><button aria-label="Copiar" className={`${ib} w-5`}><svg viewBox="0 0 16 16" className="size-[15px]" fill="#fff" stroke="#555"><path d="M.5.500h8v11h-8zM6.500 4.500h9v11h-9z" /><path d="M8 8h6M8 10.500h6M8 13h6M2 4h3M2 7h3" stroke="#3f7fbf" /></svg></button><Chev /></div>
            <button aria-label="Copiar formato" className={`${ib} w-5`}><svg viewBox="0 0 16 16" className="size-4"><path d="M0 8l5-3 5 6-3 5-4-4 1 2z" fill="#e6b96f" /><path d="M5 5l3-2 5 6-3 2z" fill="#555" /><path d="M10 5l4-4 2 2-4 4z" fill="#666" /></svg></button>
          </div>
        </div>
      </Group>

      <Group label="Fuente" w="w-[233px]" launch>
        <div className="flex items-center gap-[2px] pt-2 pl-2">
          <Combo label="Fuente" value="Calibri" w="w-[123px]" />
          <Combo label="Tamaño" value="11" w="w-[43px]" />
          <button aria-label="Aumentar" className="flex w-6 items-start justify-center text-[15px] leading-5">A<Tri className="mt-[2px] rotate-180 scale-50 text-[#3f7fbf]" /></button>
          <button aria-label="Reducir" className="flex w-6 items-start justify-center text-[13px] leading-5">A<Tri className="mt-[2px] scale-50 text-[#3f7fbf]" /></button>
        </div>
        <div className="mt-2 flex items-center pl-2 text-[12px] font-bold">
          <button className={`${ib} w-[23px]`}>N</button>
          <button className={`${ib} w-[23px] italic`}>K</button>
          <button className={`${ib} w-[25px] underline underline-offset-2`}>S</button>
          <Chev className="ml-[2px]" /><Sep h="h-6" />
          <button aria-label="Bordes" className={`${ib} w-5`}><svg viewBox="0 0 14 14" className="size-[14px]" fill="none" stroke="#555"><path d="M.5 0v13M7 0v13M13.500 0v13M0 .500h14M0 7h14" strokeDasharray="1 1.500" /><path d="M0 13.500h14" strokeWidth="1.500" /></svg></button>
          <Chev className="ml-1" /><Sep h="h-6" />
          <button aria-label="Color de relleno" className={`${ib} w-6`}><svg viewBox="0 0 16 18" className="h-[18px] w-4"><path d="M7 3l6 5-6 5-5-5z" fill="#fff" stroke="#666" /><path d="M7 3V1" stroke="#666" /><path d="M12 6q4 1 3 6L12 8z" fill="#3f7fbf" /><path d="M0 14h16v4H0z" fill="#ff0" /></svg></button>
          <Chev /><button aria-label="Color de fuente" className="ml-[6px] flex w-6 justify-center"><span className="w-4 border-b-4 border-[#f00] text-center text-[14px] leading-[15px]">A</span></button><Chev />
        </div>
      </Group>

      <Group label="Alineación" w="w-[297px]" launch>
        <div className="flex pl-[7px]">
          <div>
            <div className="flex items-center pt-2">
              <button aria-label="Superior" className={`${ib} w-6 pb-1`}><Lines ws={[14, 10, 14]} /></button>
              <button aria-label="Medio" className={`${ib} w-6`}><Lines ws={[14, 10, 14]} y={4} /></button>
              <button aria-label="Inferior" className="flex h-6 w-6 items-center justify-center border border-[#8a8886] bg-[#d0cecc]"><Lines ws={[14, 10, 14]} y={7} /></button>
              <Sep />
              <button aria-label="Orientación" className={`${ib} w-5`}><svg viewBox="0 0 18 16" className="h-4 w-[18px]" fill="none" stroke="#555" strokeWidth="1.200"><circle cx="4.500" cy="7.500" r="2.200" /><circle cx="9" cy="4.500" r="2.200" /><path d="M4.500 4l3 4.500M6 .5l2.500 4M7 14 16 6M12.500 6H16v3.500" /></svg></button><Chev className="ml-[8px]" />
            </div>
            <div className="mt-[7px] flex items-center">
              <button aria-label="Izquierda" className={`${ib} w-6`}><Lines ws={[14, 9, 14, 9]} x="l" y={2} /></button>
              <button aria-label="Centro" className={`${ib} w-6`}><Lines ws={[14, 9, 14, 9]} y={2} /></button>
              <button aria-label="Derecha" className={`${ib} w-6`}><Lines ws={[14, 9, 14, 9]} x="r" y={2} /></button>
              <Sep />
              {[0, 1].map((k) => (
                <button key={k} aria-label={k ? "Aumentar sangría" : "Disminuir sangría"} className={`${ib} w-6`}><svg viewBox="0 0 16 14" className="h-[14px] w-4" fill="none" stroke="#555"><path d="M0 .500h16M9 4.500h7M9 8.500h7M0 12.500h16" /><path d={k ? "M0 6.500h6M4 4l3 2.500L4 9" : "M7 6.500H1M3 4 .5 6.500 3 9"} stroke="#3f7fbf" strokeWidth="1.800" /></svg></button>
              ))}
            </div>
          </div>
          <span className="mt-[6px] ml-[2px] h-[60px] w-px bg-[#d0cecc]" />
          <div className="pt-2 pl-2 text-[11px] whitespace-nowrap">
            <button className="flex h-6 items-center gap-1"><svg viewBox="0 0 14 16" className="h-4 w-[14px]" fill="none" stroke="#555"><path d="M1 3.500q4-2 4 0v4q-4 0-4-1.500t4-1M8 0v7.500h2.500q2 0 2-2t-2-2H8M5 10q-3-1-3 2t3 2" /><path d="M13 9v4H8M10 11l-2 2 2 2" stroke="#3f7fbf" /></svg>Ajustar texto</button>
            <button className="mt-[7px] flex h-6 items-center gap-1"><svg viewBox="0 0 14 15" className="h-[15px] w-[14px]" fill="none" stroke="#555"><path d="M.5.500h13v14H.5zM.5 4h13M.5 11h13M7 .5V4M7 11v3.500" /><path d="M2 7.500h10M4 6 2 7.500 4 9M10 6l2 1.500L10 9" stroke="#3f7fbf" /></svg>Combinar y centrar<Chev className="ml-1" /></button>
          </div>
        </div>
      </Group>

      <Group label="Número" w="w-[156px]" launch>
        <div className="pt-2 pl-2"><Combo label="Formato de número" value="General" w="w-[141px]" /></div>
        <div className="mt-2 flex items-center pl-2">
          <button className={`${ib} w-[22px] text-[15px]`}>$</button><Chev className="ml-[2px]" />
          <button className={`${ib} ml-[6px] w-6 text-[14px]`}>%</button>
          <button className={`${ib} w-6 text-[9px] font-bold`}>000</button><Sep h="h-5" />
          <button className={`${ib} ml-1 w-5 flex-col text-[8px] leading-[9px] font-bold`}><span><span className="text-[#3f7fbf]">←</span>,0</span><span>,00</span></button>
          <button className={`${ib} ml-1 w-5 flex-col text-[8px] leading-[9px] font-bold`}><span>,00</span><span><span className="text-[#3f7fbf]">→</span>,0</span></button>
        </div>
      </Group>

      <Group label="Estilos" w="w-[224px]">
        <div className="flex pl-[6px]">
          <Big w="w-[80px]" a="Formato" b="condicional" icon={<Sheet fill={<><path d="M8 2.500h6.500V8H8zM8 13.500h9V19H8z" fill="#d9603b" /><path d="M8 8h12v5.500H8zM8 19h4v5.500H8z" fill="#3f7fbf" /></>} marks={<><path d="M15 17h14v12H15z" fill="#fff" stroke="#777" /><path d="M18 21.500h8M18 25h8M24.500 19l-5 8.500" stroke="#333" /></>} />} />
          <Big w="w-[74px]" a="Dar formato" b="como tabla" icon={<Sheet fill={<path d="M8 8h18.500v16.500H8z" fill="#bcd0e8" />} brush />} />
          <Big w="w-[58px]" a="Estilos de" b="celda" icon={<Sheet fill={<path d="M8 8h13v11H8z" fill="#bcd0e8" />} brush />} />
        </div>
      </Group>

      <Group label="Celdas" w="w-[104px]">
        <div className="flex flex-col pl-[11px] text-[11px]">
          {[["Insertar", "#3f7fbf", "M0 7h7M3 4 0 7l3 3"], ["Eliminar", "#d9603b", "M9 4l6 6M15 4 9 10"], ["Formato", "#3f7fbf", "M4 6h7v5H4z"]].map(([t, c, d]) => (
            <button key={t} className="flex h-[23px] items-center gap-[3px]">
              <svg viewBox="0 0 16 16" className="size-4" fill="#fff" stroke="#666"><path d="M1.500.500h4v3h-4zM5.500.500h4v3h-4zM1.500 12.500h4v3h-4zM5.500 12.500h4v3h-4zM8.500 5.500h6v3h-6z" /><path d={d} stroke={c} fill="none" strokeWidth="1.800" /></svg>
              {t}<Chev className="ml-1" />
            </button>
          ))}
        </div>
      </Group>

      <Group label="Edición" w="w-[187px]">
        <div className="flex">
          <div className="flex flex-col pl-[11px]">
            <button aria-label="Autosuma" className="flex h-[23px] items-center gap-[6px]"><svg viewBox="0 0 16 16" className="size-4" fill="none" stroke="#444" strokeWidth="2"><path d="M14 4V1.500H2L8 8l-6 6.500h12V12" /></svg><Chev /></button>
            <button aria-label="Rellenar" className="flex h-[23px] items-center gap-[6px]"><svg viewBox="0 0 16 16" className="size-4"><path d="M1.500 1h13v14h-13z" fill="#fff" stroke="#666" /><path d="M1 0h14v4H1z" fill="#777" /><path d="M8 5v7M5 9l3 3 3-3" stroke="#3f7fbf" strokeWidth="1.800" fill="none" /></svg><Chev /></button>
            <button aria-label="Borrar" className="flex h-[23px] items-center gap-[6px]"><svg viewBox="0 0 16 16" className="size-4"><path d="M9 2l5 4-6 7-5-3z" fill="#e8798d" /><path d="M5 8l4 4-2 2-5-3z" fill="#f4b5c0" /></svg><Chev /></button>
          </div>
          <Big w="w-[64px] ml-[3px]" a="Ordenar y" b="filtrar" icon={<svg viewBox="0 0 30 28" className="h-7 w-[30px]" fill="none"><path d="M1.500 12 6 1l4.500 11M3 8.500h6" stroke="#3f7fbf" strokeWidth="2" /><path d="M2 16h7L2 26h8" stroke="#9a55b8" strokeWidth="2" /><path d="M13 8h16l-6 7v8l-4-2v-6z" fill="#777" /></svg>} />
          <Big w="w-[70px]" a="Buscar y" b="seleccionar" icon={<svg viewBox="0 0 28 28" className="size-7" fill="#fff" stroke="#3f7fbf" strokeWidth="2"><circle cx="17" cy="10" r="8.500" /><path d="M11 16 1.500 26" strokeWidth="3.500" /></svg>} />
        </div>
      </Group>
      <button aria-label="Contraer la cinta" className="mr-[6px] ml-auto self-end"><ChevronUp className="size-4" strokeWidth={1.800} /></button>
    </div>
  );
}

function FormulaBar() {
  return (
    <div className="flex h-12 shrink-0 items-start bg-linear-to-b from-[#cfcfcf] via-[#e6e6e6] via-15% to-[#e6e6e6] px-[5px] pt-[11px] text-[12px] text-[#333]">
      <label className="flex h-[26px] w-[102px] items-center border border-[#c2c0be] bg-white px-[6px]">
        <input aria-label="Cuadro de nombres" defaultValue="C49" className="w-full bg-transparent text-[11px] outline-none" /><Tri className="text-[#666]" />
      </label>
      <span className="mt-1 w-[30px] text-center leading-4 text-[#999]">⋮</span>
      <div className="flex h-[26px] w-[110px] items-center justify-around border border-[#c2c0be] bg-white">
        <button aria-label="Cancelar"><X className="size-[14px] text-[#b5b5b5]" /></button>
        <button aria-label="Introducir"><svg viewBox="0 0 14 12" className="h-3 w-[14px]" fill="none" stroke="#b5b5b5" strokeWidth="2"><path d="M1 7l4 4 8-10" /></svg></button>
        <button className="font-['Liberation_Serif',serif] text-[15px] italic">fx</button>
      </div>
      <label className="ml-[3px] flex h-[26px] flex-1 items-center border border-[#c2c0be] bg-white pr-[5px] pl-[11px]">
        <input aria-label="Barra de fórmulas" defaultValue="10.16.128.50" className="w-full bg-transparent text-[12px] outline-none" /><Chev />
      </label>
    </div>
  );
}

const P = "Nodo Plaza Huincul", T = "Tanque Cutral Co", M = "Nodo Municipalidad";
const rows = [
  [32, 1348, P, "152", "Gem 88 y 163", "5.7(450m)", 121, 69, "155,05", 1, 1, 1, 2],
  [33, 1349, P, "168", "Gem 163", "5.1(450i)", 46, 24, "102,93", 0, 1, 0, 1, "CERRADO POR LEPORE"],
  [34, "", P, "TOTAL", "", "", 841, 569, "1044"],
  [35, 1350, T, "141", "", "5.7", 18, 22, "8.29", 0, 1, 0, 1],
  [36, 1352, T, "144", "", "5.7", 7, 33, "6.31", 0, 1, 0, 1],
  [37, 1353, T, "145", "", "5.7", 14, 26, "4.42", 0, 1, 0, 1],
  [38, 1354, T, "174", "", "5.7", 24, 16, "8.86", 0, 1, 0, 1],
  [39, 1356, T, "176", "", "5.7", 23, 17, "5.7", 0, 1, 0, 1],
  [40, 1359, T, "91", "Gemelo 141", "5.4", 10, 30, "6.03", 0, 1, 0, 1],
  [41, 1360, T, "94", "Gemelo 145", "5.4", 4, 36, "2.93", 0, 1, 0, 1],
  [42, 1361, T, "95", "", "5.2", 11, 29, "8.37", 0, 1, 0, 1],
  [43, 1362, T, "96", "", "5.2", 9, 31, "4.46", 0, 1, 0, 1],
  [44, 1363, T, "44", "", "5.4(450)", 37, 23, "76,6", 0, 1, 0, 1],
  [45, 1364, T, "45", "Gem 49 y 97", "5.4(450m)", 196, -6, "228,32", 0, 0, 0, 0],
  [46, 1365, T, "47", "Gem 50 y 98", "5.4(450m)", 93, 97, "142,88", 1, 1, 1, 2],
  [47, 1366, T, "87", "", "2.4(450)", 37, 23, "58,99", 0, 1, 0, 1, "saturando"],
  [48, 1367, T, "49", "Gem 45 y 97", "5.4(450m)", 184, 6, "216,62", 0, 1, 0, 1, "saturando"],
  [49, 1368, T, "50", "Gem 47 y 97", "5.4(450m)", 188, 2, "206,11", 1, 1, 1, 2],
  [50, 1369, T, "97", "Gem 49 y 45", "5.4(450m)", 193, -3, "252,78", 0, 0, 0, 0, "saturando"],
  [51, 1370, T, "98", "Gem 47 y 50", "5.7(450m)", 130, 60, "193,63", 1, 1, 1, 2],
  [52, "", T, "TOTAL", "", "", 1178, 442, "1376"],
  [53, 1371, M, "201", "", "5.7", 21, 19, "8.57", 0, 1, 0, 1],
  [54, 1372, M, "202", "", "5.7", 17, 23, "8.46", 0, 1, 0, 1],
  [55, 1373, M, "203", "", "5.7", 19, 21, "8.67", 0, 1, 0, 1],
  [56, 1374, M, "205", "", "5.7", 18, 22, "8.3", 0, 1, 0, 1],
  [57, 1375, M, "206", "", "5.7", 6, 34, "7.95", 0, 1, 0, 1],
];

const heads = [
  [["25/4/2021"], "d"], [["NODOS"], "g"], [["AP"], "g"], [["AP GEMELOS"], "g"], [["FRECUENCIA"], "g"],
  [["Promedio", "de", "Registrados"], "g"], [["Disponibles", "Registrados"], "g"], [["Ancho de", "Banda (Mb)"], "g"],
  [["Disponibilidad"], "g"], [["Servicio de 30 Mb"], "g"], [[], ""], [[], ""], [[], ""], [[], "n"],
];

const g = "border-r border-b border-[#d4d4d4]";
const c = "text-center";
const dotR = "[border-right-style:dotted]";

function Grid() {
  return (
    <table className="w-full table-fixed border-separate border-spacing-0 bg-white text-[11px] leading-[14px] whitespace-nowrap text-black [&_td]:overflow-hidden [&_td]:p-0">
      <colgroup>
        <col className="w-[23px]" /><col className="w-[91px]" /><col className="w-[142px]" /><col className="w-[158px]" /><col className="w-[160px]" /><col className="w-[98px]" />
        <col className="w-[63px]" /><col className="w-[86px]" /><col className="w-[66px]" /><col className="w-[127px]" /><col className="w-[103px]" />
        <col className="w-[43px]" /><col className="w-[62px]" /><col className="w-[16px]" /><col />
      </colgroup>
      <thead>
        <tr className="h-[15px] bg-[#e6e6e6] text-[#333]">
          <th className="border-r border-b border-[#9b9b9b] p-0"><svg viewBox="0 0 8 8" className="mr-[3px] ml-auto size-2"><path d="M8 0v8H0z" fill="#b5b5b5" /></svg></th>
          {"ABCDEFGHIJKLMN".split("").map((l) => <th key={l} className="border-r border-b border-r-[#b5b5b5] border-b-[#9b9b9b] p-0 font-normal">{l}</th>)}
        </tr>
        <tr className="h-[36px]">
          <th className="border-r border-b border-[#9b9b9b] bg-[#e6e6e6] p-0 align-bottom font-normal text-[#333]">1</th>
          {heads.map(([h, k], i) => (
            <th key={i} className={`relative border-b border-b-[#8a8a8a] p-0 ${k === "g" ? "" : "border-r border-r-[#d4d4d4] font-normal"}`}>
              <div className={k === "g"
                ? "flex h-[35px] flex-col items-center justify-center overflow-hidden border border-black bg-[#bfbfbf] leading-4 shadow-[1px_0_0_#000]"
                : k === "d" ? "flex h-[35px] items-center justify-center" : "h-[35px]"}>
                {h.map((t) => <span key={t}>{t}</span>)}
              </div>
              {k !== "n" && (
                <button aria-label={`Filtrar ${h.join(" ")}`} className="absolute right-0 bottom-px flex size-[17px] items-center justify-center border border-[#a5acb5] bg-[#f5f7fa]"><Tri className="scale-75 text-[#555]" /></button>
              )}
            </th>
          ))}
        </tr>
      </thead>
      <tbody>
        {rows.map(([n, a, b, ip, d, e, f, gg, h, ok, k, l, m, note]) => {
          const total = ip === "TOTAL";
          const tall = n === 33 || n === 34 || n === 51 || n === 52;
          const green = "bg-[#76933c] text-center font-bold";
          const calc = total
            ? `${green} border-b-2 border-black`
            : "text-center border-r border-b border-dotted border-black";
          const heavy = `border-r border-b-2 border-black text-center ${dotR}`;
          return (
            <tr key={n} className={tall ? "h-[17px]" : "h-4"}>
              <td className="border-r border-b border-[#9b9b9b] bg-[#e6e6e6] text-center text-[#333]">{n}</td>
              <td className={`${c} bg-[#b4c6e7]`}>{a}</td>
              <td className={`${c} ${g}`}>{b}</td>
              {total ? <td className={`${green} pr-1!`}>TOTAL</td> : <td className={`${g} pl-[3px]!`}>10.16.128.{ip}</td>}
              {total ? <td className={green} /> : <td className={`${c} ${g}`}>{d}</td>}
              {total ? <td className={green} /> : <td className={`${c} border-r-2 border-b border-r-black border-b-[#d4d4d4]`}>{e}</td>}
              <td className={n === 33 || n === 51 ? heavy : calc}>
                {total ? <span className="flex items-start justify-center"><svg viewBox="0 0 5 5" className="-mr-[5px] size-[5px]"><path d="M0 0h5L0 5z" fill="#1d8a1d" /></svg><span className="flex-1">{f}</span></span> : f}
              </td>
              <td className={n === 33 ? heavy : calc}>
                {n === 47 ? <span className="flex items-start"><svg viewBox="0 0 5 5" className="-mr-[5px] size-[5px]"><path d="M0 0h5L0 5z" fill="#1d8a1d" /></svg><span className="flex-1">{gg}</span></span> : gg}
              </td>
              <td className={total ? calc : `border-r border-b border-black border-b-[#d4d4d4] text-center ${dotR}`}>{h}</td>
              {total ? <td className={green} />
                : ok ? <td className="border-r-2 border-b border-black text-center [border-bottom-style:dotted]">Permitido Instalar</td>
                : <td className="border-b border-dotted border-white bg-black text-center text-white">NO</td>}
              <td className={g} />
              <td className={`${g} pr-[2px]! text-right`}>{k}</td>
              <td className={`${g} pr-[2px]! text-right`}>{l}</td>
              <td className={`${g} pr-[2px]! text-right`}>{m}</td>
              <td className="border-r border-b border-r-[#9b9b9b] border-b-[#d4d4d4] pl-[2px]!">{note}</td>
            </tr>
          );
        })}
      </tbody>
    </table>
  );
}

const sbtn = "flex items-center justify-center border border-[#ababab] bg-white text-[#555]";

function SheetArea() {
  return (
    <div className="relative flex min-h-0 flex-1 flex-col bg-[#e6e6e6]">
      <div className="flex">
        <div className="min-w-0 flex-1"><Grid /></div>
        <div className="flex w-[22px] flex-col items-center bg-[#e6e6e6] pt-px">
          <button aria-label="Arriba" className={`${sbtn} size-[15px]`}><Tri className="rotate-180" /></button>
          <span className="mt-[102px] mb-auto h-[88px] w-[15px] border border-[#ababab] bg-white" />
          <button aria-label="Abajo" className={`${sbtn} size-[15px]`}><Tri /></button>
        </div>
      </div>
      <div className="flex h-[27px] items-center border-t border-[#9b9b9b]">
        <button aria-label="Hoja anterior" className="ml-[25px] text-[#b0b0b0]"><Tri className="rotate-90" /></button>
        <button aria-label="Hoja siguiente" className="ml-[21px] text-[#b0b0b0]"><Tri className="-rotate-90" /></button>
        <button className="mb-[3px] ml-[38px] h-6 w-[65px] border-x border-b-2 border-x-[#ababab] border-b-[#217346] bg-white text-[12px] font-bold text-[#217346]">Sheet1</button>
        <button aria-label="Hoja nueva" className="ml-[33px] flex size-4 items-center justify-center rounded-full border border-[#777] text-[#666]"><Plus className="size-3" /></button>
        <span className="ml-auto text-[#999]">⋮</span>
        <div className="mr-6 ml-2 flex h-[15px] w-[507px] bg-[#dadada]">
          <button aria-label="Izquierda" className={`${sbtn} w-4`}><Tri className="rotate-90" /></button>
          <span className="w-[420px] border border-[#ababab] bg-white" />
          <button aria-label="Derecha" className={`${sbtn} ml-auto w-4`}><Tri className="-rotate-90" /></button>
        </div>
      </div>
      <div className="pointer-events-none absolute right-[58px] bottom-3 text-[#8a8a8a]/60">
        <p className="text-[19px] leading-7">Activar Windows</p>
        <p className="text-[14px] leading-[18px]">Ve a Configuración para activar Windows.</p>
      </div>
    </div>
  );
}

function StatusBar() {
  return (
    <div className="flex h-[22px] shrink-0 items-center border-t border-[#c6c6c6] bg-[#f3f2f1] pr-2 pl-[7px] text-[11px] text-[#444]">
      <span>Listo</span>
      <button aria-label="Normal" className="ml-auto flex h-[21px] w-10 items-center justify-center bg-[#cfcdcb]"><Grid3x3 className="size-[15px]" strokeWidth={1.800} /></button>
      <button aria-label="Diseño de página" className="flex w-10 justify-center"><svg viewBox="0 0 14 14" className="size-[14px]" fill="none" stroke="#444"><path d="M.5.500h13v13H.5zM3.500 2.500h7v9h-7zM5 5h4M5 7h4M5 9h4" /></svg></button>
      <button aria-label="Salto de página" className="flex w-10 justify-center"><svg viewBox="0 0 14 14" className="size-[14px]" fill="none" stroke="#444"><path d="M.5.500h13v13H.5zM4.500.500v7h5v-7M7 .5v7" /></svg></button>
      <button aria-label="Alejar" className="ml-1"><Minus className="size-3" /></button>
      <label className="relative mx-[3px] flex h-4 w-[100px] items-center">
        <span className="h-px w-full bg-[#999]" /><span className="absolute left-1/2 h-[5px] w-px bg-[#999]" />
        <input type="range" aria-label="Zoom" min="10" max="190" defaultValue="80" className="absolute inset-0 h-4 w-full appearance-none bg-transparent [&::-webkit-slider-thumb]:h-[11px] [&::-webkit-slider-thumb]:w-[5px] [&::-webkit-slider-thumb]:appearance-none [&::-webkit-slider-thumb]:bg-[#666]" />
      </label>
      <button aria-label="Acercar"><Plus className="size-3" /></button>
      <span className="ml-[10px]">80%</span>
    </div>
  );
}

export default function App() {
  return (
    <div className="grid h-screen grid-cols-2 overflow-hidden font-['Open_Sans',sans-serif]">
      <div className="relative flex min-w-0 flex-col overflow-hidden">
        <TabStrip />
        <Omnibar />
        <Bookmarks />
        <TranslatePopup />
        <RadioPage />
        <LeftTaskbar />
      </div>
      <div className="flex min-w-0 flex-col overflow-hidden">
        <ExcelTitle />
        <RibbonTabs />
        <Ribbon />
        <FormulaBar />
        <SheetArea />
        <StatusBar />
        <RightTaskbar />
      </div>
    </div>
  );
}
